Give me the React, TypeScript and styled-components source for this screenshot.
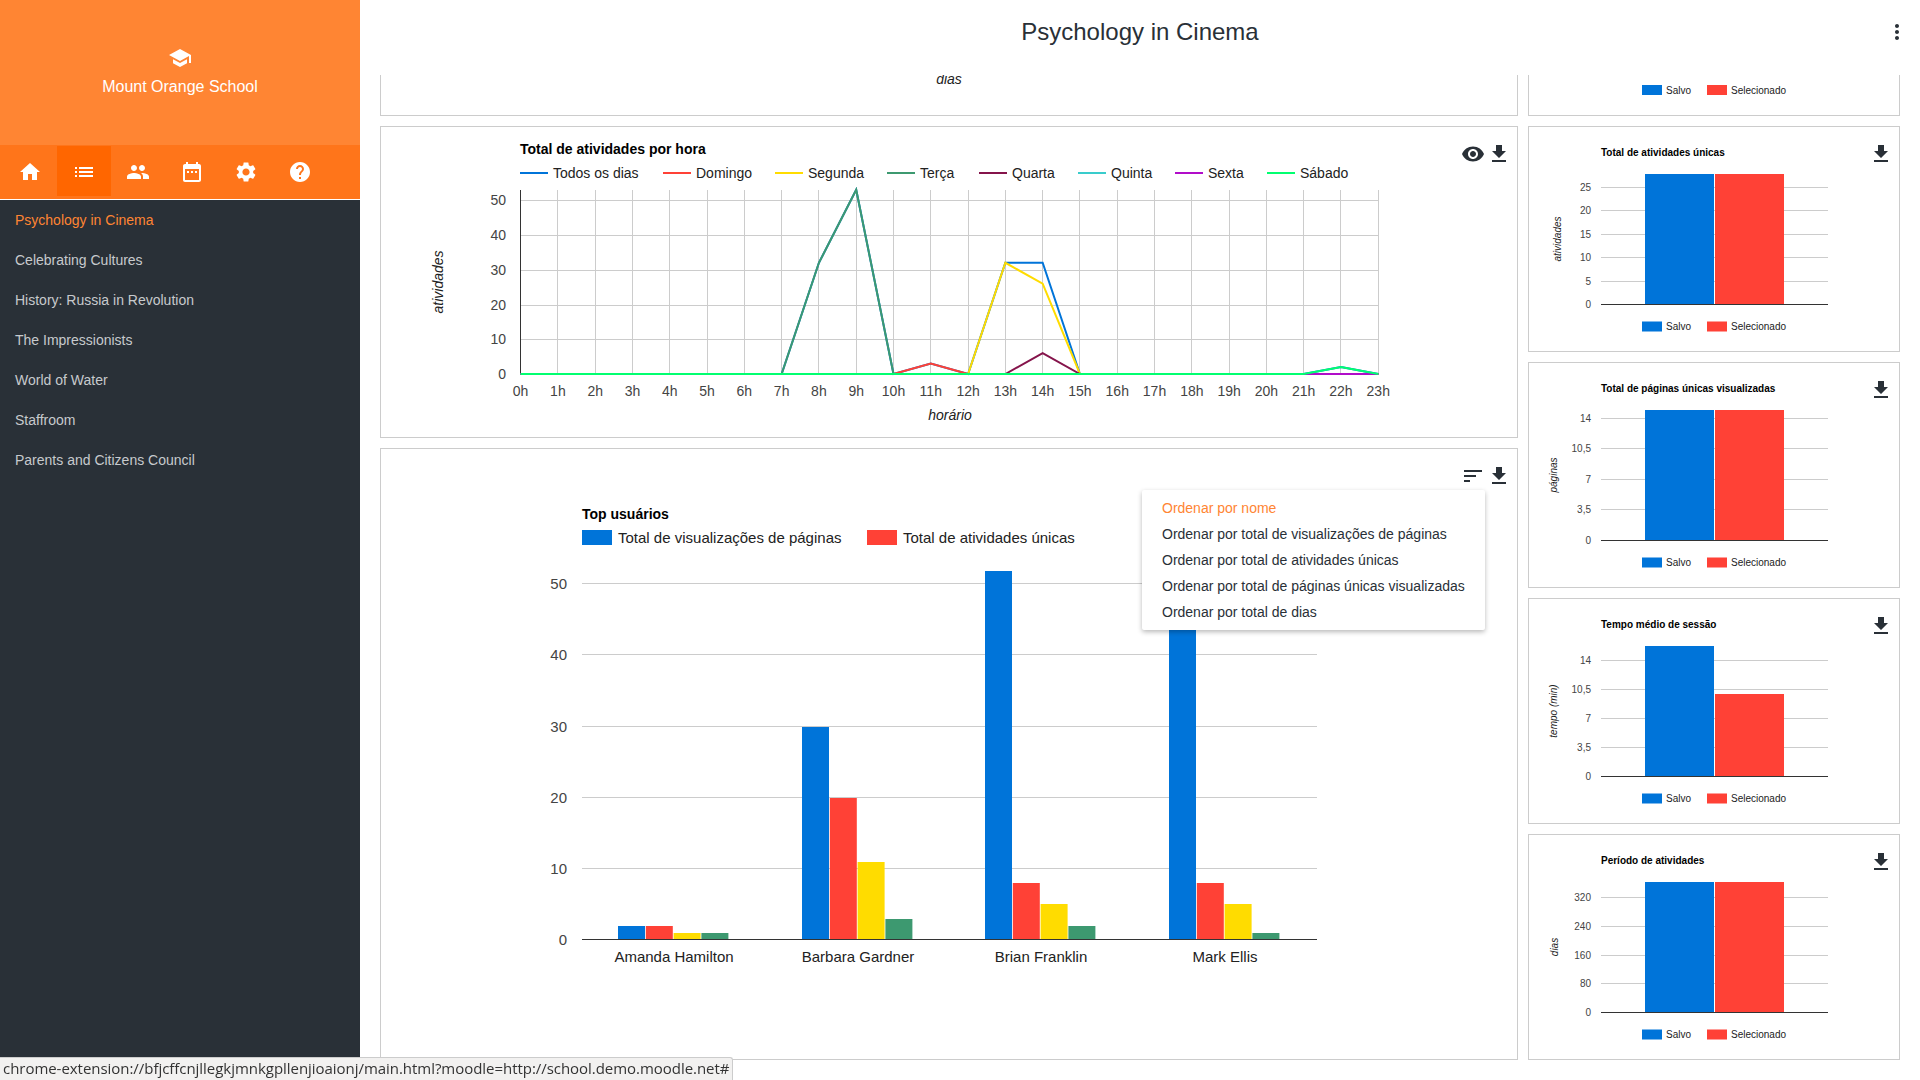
import * as React from 'react'
import styled, { createGlobalStyle } from 'styled-components'

const BLUE = '#0074d9'
const RED = '#ff4136'
const YELLOW = '#ffdc00'
const GREEN = '#3d9970'

const icons = {
  school: 'M5 13.18v4L12 21l7-3.82v-4L12 17l-7-3.82zM12 3L1 9l11 6 9-4.91V17h2V9L12 3z',
  home: 'M10 20v-6h4v6h5v-8h3L12 3 2 12h3v8z',
  list: 'M3 13h2v-2H3v2zm0 4h2v-2H3v2zm0-8h2V7H3v2zm4 4h14v-2H7v2zm0 4h14v-2H7v2zM7 7v2h14V7H7z',
  people: 'M16 11c1.66 0 2.99-1.34 2.99-3S17.66 5 16 5c-1.66 0-3 1.34-3 3s1.34 3 3 3zm-8 0c1.66 0 2.99-1.34 2.99-3S9.66 5 8 5C6.34 5 5 6.34 5 8s1.34 3 3 3zm0 2c-2.33 0-7 1.17-7 3.5V19h14v-2.5c0-2.33-4.67-3.5-7-3.5zm8 0c-.29 0-.62.02-.97.05 1.16.84 1.97 1.97 1.97 3.45V19h6v-2.5c0-2.33-4.67-3.5-7-3.5z',
  calendar: 'M9 11H7v2h2v-2zm4 0h-2v2h2v-2zm4 0h-2v2h2v-2zm2-7h-1V2h-2v2H8V2H6v2H5c-1.11 0-1.99.9-1.99 2L3 20c0 1.1.89 2 2 2h14c1.1 0 2-.9 2-2V6c0-1.1-.9-2-2-2zm0 16H5V9h14v11z',
  settings: 'M19.14 12.94c.04-.3.06-.61.06-.94 0-.32-.02-.64-.07-.94l2.03-1.58c.18-.14.23-.41.12-.61l-1.92-3.32c-.12-.22-.37-.29-.59-.22l-2.39.96c-.5-.38-1.03-.7-1.62-.94l-.36-2.54c-.04-.24-.24-.41-.48-.41h-3.84c-.24 0-.43.17-.47.41l-.36 2.54c-.59.24-1.13.57-1.62.94l-2.39-.96c-.22-.08-.47 0-.59.22L2.74 8.87c-.12.21-.08.47.12.61l2.03 1.58c-.05.3-.09.63-.09.94s.02.64.07.94l-2.03 1.58c-.18.14-.23.41-.12.61l1.92 3.32c.12.22.37.29.59.22l2.39-.96c.5.38 1.03.7 1.62.94l.36 2.54c.05.24.24.41.48.41h3.84c.24 0 .44-.17.47-.41l.36-2.54c.59-.24 1.13-.56 1.62-.94l2.39.96c.22.08.47 0 .59-.22l1.92-3.32c.12-.22.07-.47-.12-.61l-2.01-1.58zM12 15.6c-1.98 0-3.6-1.62-3.6-3.6s1.62-3.6 3.6-3.6 3.6 1.62 3.6 3.6-1.62 3.6-3.6 3.6z',
  help: 'M12 2C6.48 2 2 6.48 2 12s4.48 10 10 10 10-4.48 10-10S17.52 2 12 2zm1 17h-2v-2h2v2zm2.07-7.75l-.9.92C13.45 12.9 13 13.5 13 15h-2v-.5c0-1.1.45-2.1 1.17-2.83l1.24-1.26c.37-.36.59-.86.59-1.41 0-1.1-.9-2-2-2s-2 .9-2 2H8c0-2.21 1.79-4 4-4s4 1.79 4 4c0 .88-.36 1.68-.93 2.25z',
  more: 'M12 8c1.1 0 2-.9 2-2s-.9-2-2-2-2 .9-2 2 .9 2 2 2zm0 2c-1.1 0-2 .9-2 2s.9 2 2 2 2-.9 2-2-.9-2-2-2zm0 6c-1.1 0-2 .9-2 2s.9 2 2 2 2-.9 2-2-.9-2-2-2z',
  eye: 'M12 4.5C7 4.5 2.73 7.61 1 12c1.73 4.39 6 7.5 11 7.5s9.27-3.11 11-7.5c-1.73-4.39-6-7.5-11-7.5zM12 17c-2.76 0-5-2.24-5-5s2.24-5 5-5 5 2.24 5 5-2.24 5-5 5zm0-8c-1.66 0-3 1.34-3 3s1.34 3 3 3 3-1.34 3-3-1.34-3-3-3z',
  download: 'M19 9h-4V3H9v6H5l7 7 7-7zM5 18v2h14v-2H5z',
  sort: 'M3 18h6v-2H3v2zM3 6v2h18V6H3zm0 7h12v-2H3v2z',
}

const Icon = ({ name }: { name: keyof typeof icons }) => (
  <svg width="24" height="24" viewBox="0 0 24 24" fill="currentColor">
    <path d={icons[name]} />
  </svg>
)

const GlobalStyle = createGlobalStyle`
  html, body {
    margin: 0;
    height: 100%;
    overflow: hidden;
    background: #fff;
    font-family: "Liberation Sans", Arial, sans-serif;
  }
`

const Page = styled.div`
  display: flex;
  width: 1920px;
  height: 1080px;
  overflow: hidden;
`

const Sidebar = styled.aside`
  width: 360px;
  flex: none;
  background: #293037;
`

const Brand = styled.div`
  height: 145px;
  box-sizing: border-box;
  padding-top: 46px;
  display: flex;
  flex-direction: column;
  align-items: center;
  gap: 7px;
  background: #ff8533;
  color: #fff;
  font-size: 16px;
  line-height: 20px;
`

const Tabs = styled.div`
  display: flex;
  height: 54px;
  box-sizing: border-box;
  padding: 1px 3px 0;
  background: #ff751a;
  box-shadow: 0 1px 0 #fff;
  margin-bottom: 1px;
`

const Tab = styled.div<{ $active?: boolean }>`
  width: 54px;
  height: 50px;
  box-sizing: border-box;
  padding-top: 2px;
  display: flex;
  align-items: center;
  justify-content: center;
  color: #fff;
  background: ${props => props.$active ? '#ff6600' : 'transparent'};
`

const CourseList = styled.nav`
  display: flex;
  flex-direction: column;
`

const Course = styled.div<{ $active?: boolean }>`
  height: 40px;
  line-height: 40px;
  padding-left: 15px;
  font-size: 14px;
  color: ${props => props.$active ? '#ff8533' : '#c7cacd'};
`

const Main = styled.main`
  flex: 1;
  min-width: 0;
  display: flex;
  flex-direction: column;
`

const Header = styled.header`
  height: 75px;
  flex: none;
  box-sizing: border-box;
  padding: 8px 11px 19px;
  display: grid;
  grid-template-columns: 1fr auto 1fr;
  align-items: center;
`

const PageTitle = styled.h1`
  grid-column: 2;
  margin: 0;
  font-size: 24px;
  font-weight: 400;
  color: #293037;
`

const MoreButton = styled.div`
  justify-self: end;
  display: flex;
  color: #293037;
`

const Content = styled.div`
  display: grid;
  grid-template-columns: 1138px 372px;
  gap: 10px;
  padding: 0 20px;
`

const Column = styled.div`
  display: flex;
  flex-direction: column;
  gap: 10px;
`

const Card = styled.section<{ $height: number; $cut?: boolean }>`
  position: relative;
  height: ${props => props.$height}px;
  box-sizing: border-box;
  border: 1px solid #ccc;
  border-top-width: ${props => props.$cut ? 0 : 1}px;
  background: #fff;
  overflow: hidden;
`

const Chart = styled.svg`
  display: block;
  width: 100%;
  height: 100%;
  font-family: "Liberation Sans", Arial, sans-serif;
`

const ChartTitle = styled.text<{ $small?: boolean }>`
  font-size: ${props => props.$small ? 10 : 14}px;
  font-weight: 700;
  fill: #000;
`

const Label = styled.text<{ $size: number }>`
  font-size: ${props => props.$size}px;
  fill: #444;
`

const LegendText = styled.text<{ $size: number }>`
  font-size: ${props => props.$size}px;
  fill: #222;
`

const AxisTitle = styled.text<{ $small?: boolean }>`
  font-size: ${props => props.$small ? 10 : 14}px;
  font-style: italic;
  fill: #222;
`

const Actions = styled.div<{ $right: number; $top: number }>`
  position: absolute;
  top: ${props => props.$top}px;
  right: ${props => props.$right}px;
  display: flex;
  gap: 2px;
  color: #293037;
`

const Menu = styled.ul`
  position: absolute;
  left: 761px;
  top: 41px;
  width: 343px;
  height: 140px;
  box-sizing: border-box;
  margin: 0;
  padding: 5px 0;
  list-style: none;
  background: #fff;
  border-radius: 2px;
  box-shadow: 0 2px 5px rgba(0, 0, 0, .28);
`

const MenuItem = styled.li<{ $active?: boolean }>`
  height: 26px;
  line-height: 26px;
  padding-left: 20px;
  font-size: 14px;
  white-space: nowrap;
  color: ${props => props.$active ? '#ff8533' : '#293037'};
`

const StatusBubble = styled.div`
  position: fixed;
  left: 0;
  bottom: 0;
  height: 23px;
  box-sizing: border-box;
  padding: 0 3px;
  background: #f2f1f0;
  border-top: 1px solid #ccc;
  border-right: 1px solid #ccc;
  border-top-right-radius: 3px;
  font-family: "Open Sans", sans-serif;
  font-size: 15px;
  line-height: 20px;
  letter-spacing: -.04px;
  color: #333;
  white-space: nowrap;
`

const courses = [
  'Psychology in Cinema',
  'Celebrating Cultures',
  'History: Russia in Revolution',
  'The Impressionists',
  'World of Water',
  'Staffroom',
  'Parents and Citizens Council',
]

const zeros = () => new Array(24).fill(0)
const withValues = (values: Record<number, number>) => {
  const out = zeros()
  Object.keys(values).forEach(k => { out[Number(k)] = values[Number(k)] })
  return out
}

const series = [
  { name: 'Todos os dias', color: BLUE, line: 520, text: 553, data: withValues({ 8: 32, 9: 53, 11: 3, 13: 32, 14: 32, 22: 2 }) },
  { name: 'Domingo', color: RED, line: 663, text: 696, data: withValues({ 11: 3 }) },
  { name: 'Segunda', color: YELLOW, line: 775, text: 808, data: withValues({ 13: 32, 14: 26 }) },
  { name: 'Terça', color: GREEN, line: 887, text: 920, data: withValues({ 8: 32, 9: 53 }) },
  { name: 'Quarta', color: '#85144b', line: 979, text: 1012, data: withValues({ 14: 6 }) },
  { name: 'Quinta', color: '#39cccc', line: 1078, text: 1111, data: zeros() },
  { name: 'Sexta', color: '#b10dc9', line: 1175, text: 1208, data: zeros() },
  { name: 'Sábado', color: '#01ff70', line: 1267, text: 1300, data: withValues({ 22: 2 }) },
]

// hour chart, coordinates are page pixels shifted by the card origin
const HourChart = () => {
  const ox = 381
  const oy = 127
  const x = (h: number) => 520.6 + h * 37.29 - ox
  const y = (v: number) => 374 - v * 3.475 - oy
  const rows = [[0, 374], [10, 339], [20, 305], [30, 270], [40, 235], [50, 200]]
  return (
    <Chart>
      <ChartTitle x={520 - ox} y={154 - oy}>Total de atividades por hora</ChartTitle>
      {series.map(s => (
        <g key={s.name}>
          <rect x={s.line - ox} y={172 - oy} width={28} height={2} fill={s.color} />
          <LegendText $size={14} x={s.text - ox} y={178 - oy}>{s.name}</LegendText>
        </g>
      ))}
      {rows.map(([v, py]) => (
        <g key={v}>
          <rect x={x(0)} y={py - oy} width={x(23) - x(0)} height={1} fill="#ccc" shapeRendering="crispEdges" />
          <Label $size={14} x={506 - ox} y={py + 5 - oy} textAnchor="end">{v}</Label>
        </g>
      ))}
      {zeros().map((_, h) => (
        <g key={h}>
          <rect x={Math.floor(x(h))} y={190 - oy} width={1} height={184} fill={h === 0 ? '#333' : '#ccc'} shapeRendering="crispEdges" />
          <Label $size={14} x={x(h)} y={396 - oy} textAnchor="middle">{h}h</Label>
        </g>
      ))}
      {series.map(s => (
        <polyline
          key={s.name}
          fill="none"
          stroke={s.color}
          strokeWidth={2}
          points={s.data.map((v: number, h: number) => `${x(h)},${y(v)}`).join(' ')}
        />
      ))}
      <AxisTitle x={950 - ox} y={420 - oy} textAnchor="middle">horário</AxisTitle>
      <AxisTitle transform={`translate(${443 - ox},${282 - oy}) rotate(-90)`} textAnchor="middle">atividades</AxisTitle>
    </Chart>
  )
}

const users = [
  { name: 'Amanda Hamilton', left: 618, center: 674, values: [2, 2, 1, 1] },
  { name: 'Barbara Gardner', left: 802, center: 858, values: [30, 20, 11, 3] },
  { name: 'Brian Franklin', left: 985, center: 1041, values: [52, 8, 5, 2] },
  { name: 'Mark Ellis', left: 1169, center: 1225, values: [50, 8, 5, 1] },
]

const TopUsersChart = () => {
  const ox = 381
  const oy = 449
  const rows = [[0, 939], [10, 868], [20, 797], [30, 726], [40, 654], [50, 583]]
  const colors = [BLUE, RED, YELLOW, GREEN]
  return (
    <Chart>
      <ChartTitle x={582 - ox} y={519 - oy}>Top usuários</ChartTitle>
      <rect x={582 - ox} y={530 - oy} width={30} height={15} fill={BLUE} />
      <LegendText $size={15} x={618 - ox} y={543 - oy}>Total de visualizações de páginas</LegendText>
      <rect x={867 - ox} y={530 - oy} width={30} height={15} fill={RED} />
      <LegendText $size={15} x={903 - ox} y={543 - oy}>Total de atividades únicas</LegendText>
      {rows.map(([v, py]) => (
        <g key={v}>
          <rect x={582 - ox} y={py - oy} width={735} height={1} fill="#ccc" shapeRendering="crispEdges" />
          <Label $size={15} x={567 - ox} y={py + 6 - oy} textAnchor="end">{v}</Label>
        </g>
      ))}
      {users.map(u => (
        <g key={u.name}>
          {u.values.map((v, i) => {
            const h = Math.round(v * 7.1)
            return <rect key={i} x={u.left + i * 27.8 - ox} y={940 - h - oy} width={27} height={h} fill={colors[i]} />
          })}
          <LegendText $size={15} x={u.center - ox} y={962 - oy} textAnchor="middle">{u.name}</LegendText>
        </g>
      ))}
      <rect x={582 - ox} y={939 - oy} width={735} height={1} fill="#333" shapeRendering="crispEdges" />
    </Chart>
  )
}

const SmallLegend = ({ y }: { y: number }) => (
  <g>
    <rect x={113} y={y - 5} width={20} height={10} fill={BLUE} />
    <LegendText $size={10} x={137} y={y + 3.5}>Salvo</LegendText>
    <rect x={178} y={y - 5} width={20} height={10} fill={RED} />
    <LegendText $size={10} x={202} y={y + 3.5}>Selecionado</LegendText>
  </g>
)

type SmallProps = {
  title: string
  axis: string
  axisX: number
  ticks: [string, number][]
  redTop?: number
}

// offsets inside the small cards, measured from the top border
const SmallChart = ({ title, axis, axisX, ticks, redTop = 47 }: SmallProps) => (
  <Card $height={226}>
    <Chart>
      <ChartTitle $small x={72} y={29}>{title}</ChartTitle>
      {ticks.map(([label, py]) => (
        <g key={label}>
          <rect x={72} y={py} width={227} height={1} fill={label === '0' ? '#333' : '#ccc'} shapeRendering="crispEdges" />
          <Label $size={10} x={62} y={py + 3.5} textAnchor="end">{label}</Label>
        </g>
      ))}
      <rect x={116} y={47} width={69} height={130} fill={BLUE} />
      <rect x={186} y={redTop} width={69} height={177 - redTop} fill={RED} />
      <AxisTitle $small transform={`translate(${axisX},112) rotate(-90)`} textAnchor="middle">{axis}</AxisTitle>
      <SmallLegend y={199.5} />
    </Chart>
    <Actions $right={6} $top={15}>
      <Icon name="download" />
    </Actions>
  </Card>
)

export default function App() {
  return (
    <Page>
      <GlobalStyle />
      <Sidebar>
        <Brand>
          <Icon name="school" />
          <span>Mount Orange School</span>
        </Brand>
        <Tabs>
          <Tab><Icon name="home" /></Tab>
          <Tab $active><Icon name="list" /></Tab>
          <Tab><Icon name="people" /></Tab>
          <Tab><Icon name="calendar" /></Tab>
          <Tab><Icon name="settings" /></Tab>
          <Tab><Icon name="help" /></Tab>
        </Tabs>
        <CourseList>
          {courses.map((c, i) => <Course key={c} $active={i === 0}>{c}</Course>)}
        </CourseList>
      </Sidebar>
      <Main>
        <Header>
          <PageTitle>Psychology in Cinema</PageTitle>
          <MoreButton><Icon name="more" /></MoreButton>
        </Header>
        <Content>
          <Column>
            <Card $height={41} $cut>
              <Chart>
                <AxisTitle x={568} y={9} textAnchor="middle">dias</AxisTitle>
              </Chart>
            </Card>
            <Card $height={312}>
              <HourChart />
              <Actions $right={6} $top={15}>
                <Icon name="eye" />
                <Icon name="download" />
              </Actions>
            </Card>
            <Card $height={612}>
              <TopUsersChart />
              <Actions $right={6} $top={15}>
                <Icon name="sort" />
                <Icon name="download" />
              </Actions>
              <Menu>
                <MenuItem $active>Ordenar por nome</MenuItem>
                <MenuItem>Ordenar por total de visualizações de páginas</MenuItem>
                <MenuItem>Ordenar por total de atividades únicas</MenuItem>
                <MenuItem>Ordenar por total de páginas únicas visualizadas</MenuItem>
                <MenuItem>Ordenar por total de dias</MenuItem>
              </Menu>
            </Card>
          </Column>
          <Column>
            <Card $height={41} $cut>
              <Chart>
                <SmallLegend y={15} />
              </Chart>
            </Card>
            <SmallChart
              title="Total de atividades únicas"
              axis="atividades"
              axisX={32}
              ticks={[['25', 60], ['20', 83], ['15', 107], ['10', 130], ['5', 154], ['0', 177]]}
            />
            <SmallChart
              title="Total de páginas únicas visualizadas"
              axis="páginas"
              axisX={28}
              ticks={[['14', 55], ['10,5', 85], ['7', 116], ['3,5', 146], ['0', 177]]}
            />
            <SmallChart
              title="Tempo médio de sessão"
              axis="tempo (min)"
              axisX={28}
              redTop={95}
              ticks={[['14', 61], ['10,5', 90], ['7', 119], ['3,5', 148], ['0', 177]]}
            />
            <SmallChart
              title="Período de atividades"
              axis="dias"
              axisX={29}
              ticks={[['320', 62], ['240', 91], ['160', 120], ['80', 148], ['0', 177]]}
            />
          </Column>
        </Content>
      </Main>
      <StatusBubble>chrome-extension://bfjcffcnjllegkjmnkgpllenjioaionj/main.html?moodle=http://school.demo.moodle.net#</StatusBubble>
    </Page>
  )
}
